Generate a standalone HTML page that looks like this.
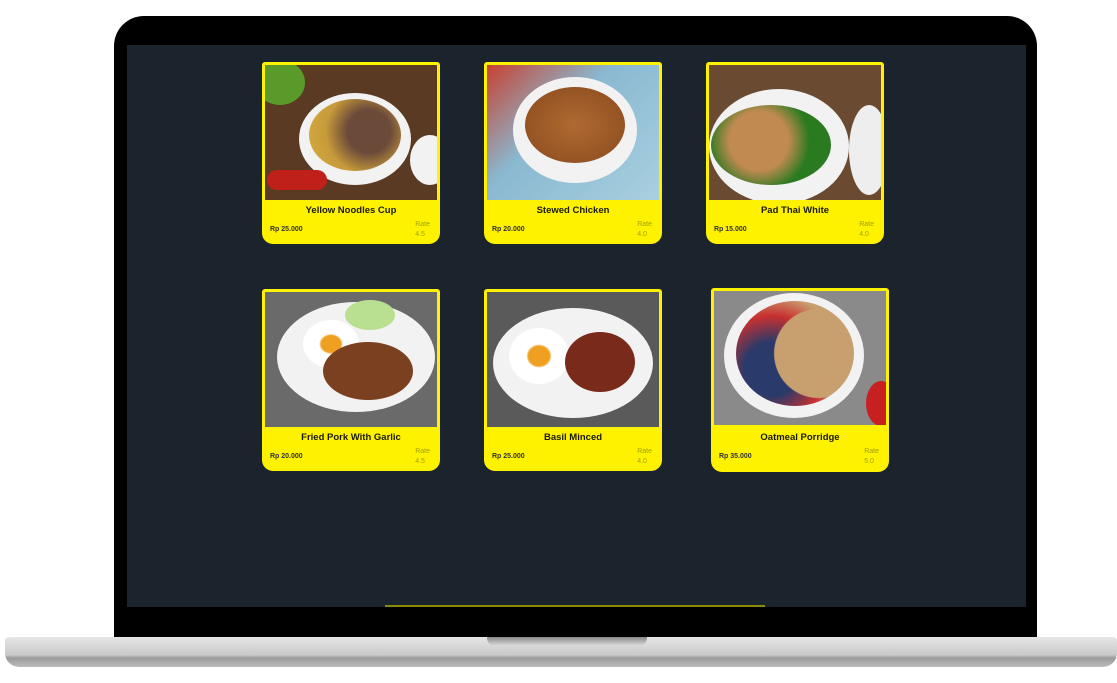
<!DOCTYPE html>
<html><head><style>
*{margin:0;padding:0;box-sizing:border-box}
body{width:1117px;height:683px;background:#fff;position:relative;overflow:hidden;font-family:"Liberation Sans",sans-serif}
.bezel{position:absolute;left:114px;top:16px;width:923px;height:624px;background:#000;border-radius:30px 30px 0 0}
.screen{position:absolute;left:127px;top:45px;width:899px;height:562px;background:#1b232c}
.bar{position:absolute;left:385px;top:605px;width:380px;height:2px;background:#8c8a00}
.base{position:absolute;left:5px;top:637px;width:1112px;height:30px;background:linear-gradient(#e6e6e6,#c9c9c9 60%,#9a9a9a 70%,#bdbdbd);border-radius:4px 4px 14px 14px}
.notch{position:absolute;left:487px;top:637px;width:160px;height:9px;background:linear-gradient(#888,#ddd);border-radius:0 0 8px 8px}
.card{position:absolute;width:178px;height:182px;background:#fff200;border-radius:3px 3px 11px 11px;padding:3px}
.img{width:172px;height:135px;position:relative;overflow:hidden}
.name{position:absolute;top:143px;left:0;right:0;text-align:center;font-size:9.5px;font-weight:bold;color:#1a1a00}
.price{position:absolute;top:164px;left:8px;font-size:7px;font-weight:bold;color:#333}
.rate{position:absolute;top:158px;right:10px;font-size:7px;color:#a0a000;line-height:10px}
.bowl{position:absolute;border-radius:50%;background:#f2f2f2}
.food{position:absolute;border-radius:50%}
</style></head><body>
<div class="bezel"></div>
<div class="screen"></div>
<div class="bar"></div>
<div class="base"></div>
<div class="notch"></div>

<div class="card" style="left:262px;top:62px">
 <div class="img" style="background:#5a3a22">
  <div class="food" style="left:-10px;top:-5px;width:50px;height:45px;background:#5a9a2a"></div>
  <div class="bowl" style="left:34px;top:28px;width:112px;height:92px"></div>
  <div class="food" style="left:44px;top:34px;width:92px;height:72px;background:radial-gradient(circle at 65% 45%,#6b4a3a 30%,#c79a3a 60%,#d8b040)"></div>
  <div class="food" style="left:2px;top:105px;width:60px;height:20px;background:#c0201a;border-radius:10px"></div>
  <div class="bowl" style="left:145px;top:70px;width:40px;height:50px"></div>
 </div>
 <div class="name">Yellow Noodles Cup</div><div class="price">Rp 25.000</div><div class="rate">Rate<br>4.5</div>
</div>

<div class="card" style="left:484px;top:62px">
 <div class="img" style="background:linear-gradient(135deg,#c84030,#8ab8d0 40%,#a8d0e0)">
  <div class="bowl" style="left:26px;top:12px;width:124px;height:106px"></div>
  <div class="food" style="left:38px;top:22px;width:100px;height:76px;background:radial-gradient(#b06a30,#8a4a20)"></div>
 </div>
 <div class="name">Stewed Chicken</div><div class="price">Rp 20.000</div><div class="rate">Rate<br>4.0</div>
</div>

<div class="card" style="left:706px;top:62px">
 <div class="img" style="background:#6a4a30">
  <div class="bowl" style="left:0px;top:24px;width:140px;height:115px"></div>
  <div class="food" style="left:2px;top:40px;width:120px;height:80px;background:radial-gradient(circle at 40% 45%,#c08a50 35%,#2a7a20 60%)"></div>
  <div class="bowl" style="left:140px;top:40px;width:40px;height:90px;background:#eee"></div>
 </div>
 <div class="name">Pad Thai White</div><div class="price">Rp 15.000</div><div class="rate">Rate<br>4.0</div>
</div>

<div class="card" style="left:262px;top:289px">
 <div class="img" style="background:#6a6a6a">
  <div class="bowl" style="left:12px;top:10px;width:158px;height:110px"></div>
  <div class="food" style="left:38px;top:28px;width:56px;height:48px;background:radial-gradient(#f0a020 25%,#fff 30%)"></div>
  <div class="food" style="left:58px;top:50px;width:90px;height:58px;background:#7a4020"></div>
  <div class="food" style="left:80px;top:8px;width:50px;height:30px;background:#b8e090"></div>
 </div>
 <div class="name">Fried Pork With Garlic</div><div class="price">Rp 20.000</div><div class="rate">Rate<br>4.5</div>
</div>

<div class="card" style="left:484px;top:289px">
 <div class="img" style="background:#5a5a5a">
  <div class="bowl" style="left:6px;top:16px;width:160px;height:110px"></div>
  <div class="food" style="left:22px;top:36px;width:60px;height:56px;background:radial-gradient(#f0a020 25%,#fff 30%)"></div>
  <div class="food" style="left:78px;top:40px;width:70px;height:60px;background:#7a2a1a"></div>
 </div>
 <div class="name">Basil Minced</div><div class="price">Rp 25.000</div><div class="rate">Rate<br>4.0</div>
</div>

<div class="card" style="left:711px;top:288px;height:184px">
 <div class="img" style="background:#8a8a8a;height:134px">
  <div class="bowl" style="left:10px;top:2px;width:140px;height:125px"></div>
  <div class="food" style="left:22px;top:10px;width:118px;height:105px;background:radial-gradient(circle at 70% 50%,#c8a070 45%,transparent 46%),radial-gradient(circle at 30% 65%,#2a3a6a 25%,#c83030 50%,#c8a070 70%)"></div>
  <div class="food" style="left:152px;top:90px;width:30px;height:45px;background:#c82020"></div>
 </div>
 <div class="name" style="top:144px">Oatmeal Porridge</div><div class="price" style="top:165px">Rp 35.000</div><div class="rate" style="top:159px">Rate<br>5.0</div>
</div>
</body></html>
